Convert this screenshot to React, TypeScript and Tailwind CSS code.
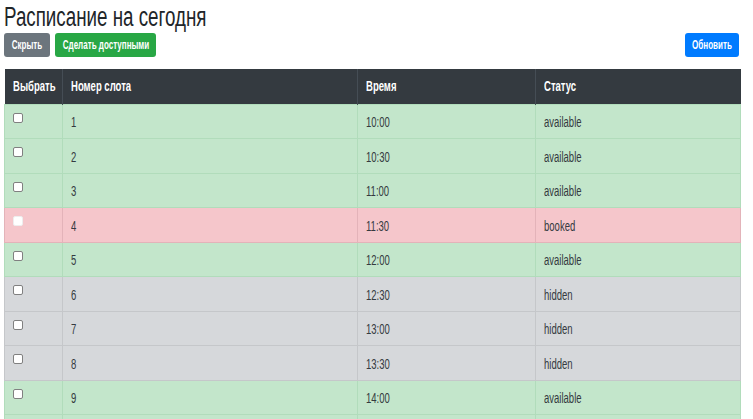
const slots = [
  { id: 1, time: '10:00', status: 'available' },
  { id: 2, time: '10:30', status: 'available' },
  { id: 3, time: '11:00', status: 'available' },
  { id: 4, time: '11:30', status: 'booked' },
  { id: 5, time: '12:00', status: 'available' },
  { id: 6, time: '12:30', status: 'hidden' },
  { id: 7, time: '13:00', status: 'hidden' },
  { id: 8, time: '13:30', status: 'hidden' },
  { id: 9, time: '14:00', status: 'available' },
  { id: 10, time: '14:30', status: 'available' },
];

const rowStyle: Record<string, string> = {
  available: 'bg-[#c3e6cb] border-[#b1dcbb]',
  booked: 'bg-[#f5c6cb] border-[#e3b3b9]',
  hidden: 'bg-[#d6d8db] border-[#c5c7ca]',
};

function N({ children, className = '' }: { children: React.ReactNode; className?: string }) {
  return <span className={`inline-block whitespace-nowrap origin-left scale-x-[0.68] ${className}`}>{children}</span>;
}

function Btn({ label, w, color, className = '' }: { label: string; w: string; color: string; className?: string }) {
  return (
    <button className={`relative h-[24px] rounded-[3px] text-white text-[12px] font-bold ${w} ${color} ${className}`}>
      <span className="absolute left-1/2 top-1/2 -translate-x-1/2 -translate-y-1/2 whitespace-nowrap origin-center scale-x-[0.67]">
        {label}
      </span>
    </button>
  );
}

export default function App() {
  return (
    <div
      className="w-[753px] h-[419px] overflow-hidden bg-white px-[4px] text-[#212529]"
      style={{ fontFamily: '"Liberation Sans", Arial, sans-serif' }}
    >
      <h1 className="text-[27px] leading-[32px] pt-[1px] h-[33px]">
        <N className="scale-x-[0.695]">Расписание на сегодня</N>
      </h1>
      <div className="flex items-center h-[24px] w-[736px]">
        <Btn label="Скрыть" w="w-[46px]" color="bg-[#6c757d]" />
        <Btn label="Сделать доступными" w="w-[101px]" color="bg-[#28a745]" className="ml-[5px]" />
        <Btn label="Обновить" w="w-[54px]" color="bg-[#007bff]" className="ml-auto mr-[1px]" />
      </div>
      <table className="mt-[12px] w-[736px] border-collapse table-fixed">
        <colgroup>
          <col className="w-[58px]" />
          <col className="w-[295px]" />
          <col className="w-[178px]" />
          <col className="w-[205px]" />
        </colgroup>
        <thead>
          <tr className="bg-[#343a40] text-white h-[35px] text-[14px]">
            <th className="text-left font-bold px-[8px] border-r border-[#454d55]">
              <N className="scale-x-[0.66]">Выбрать</N>
            </th>
            <th className="text-left font-bold px-[8px] border-r border-[#454d55]">
              <N className="scale-x-[0.66]">Номер слота</N>
            </th>
            <th className="text-left font-bold px-[8px] border-r border-[#454d55]">
              <N className="scale-x-[0.66]">Время</N>
            </th>
            <th className="text-left font-bold px-[8px]">
              <N className="scale-x-[0.66]">Статус</N>
            </th>
          </tr>
        </thead>
        <tbody className="text-[14px] leading-[14px] text-[#343a40]">
          {slots.map((s) => {
            const c = rowStyle[s.status];
            return (
              <tr key={s.id} className={`h-[34.5px] ${c}`}>
                <td className={`align-top px-[8px] pt-[8px] border ${c}`}>
                  <span
                    className={`block w-[10px] h-[10px] rounded-[2px] bg-white border ${
                      s.status === 'booked' ? 'border-[#eeeeee]' : 'border-[#808080]'
                    }`}
                  />
                </td>
                <td className={`px-[8px] pt-[2px] border ${c}`}>
                  <N>{s.id}</N>
                </td>
                <td className={`px-[8px] pt-[2px] border ${c}`}>
                  <N>{s.time}</N>
                </td>
                <td className={`px-[8px] pt-[2px] border ${c}`}>
                  <N>{s.status}</N>
                </td>
              </tr>
            );
          })}
        </tbody>
      </table>
    </div>
  );
}
